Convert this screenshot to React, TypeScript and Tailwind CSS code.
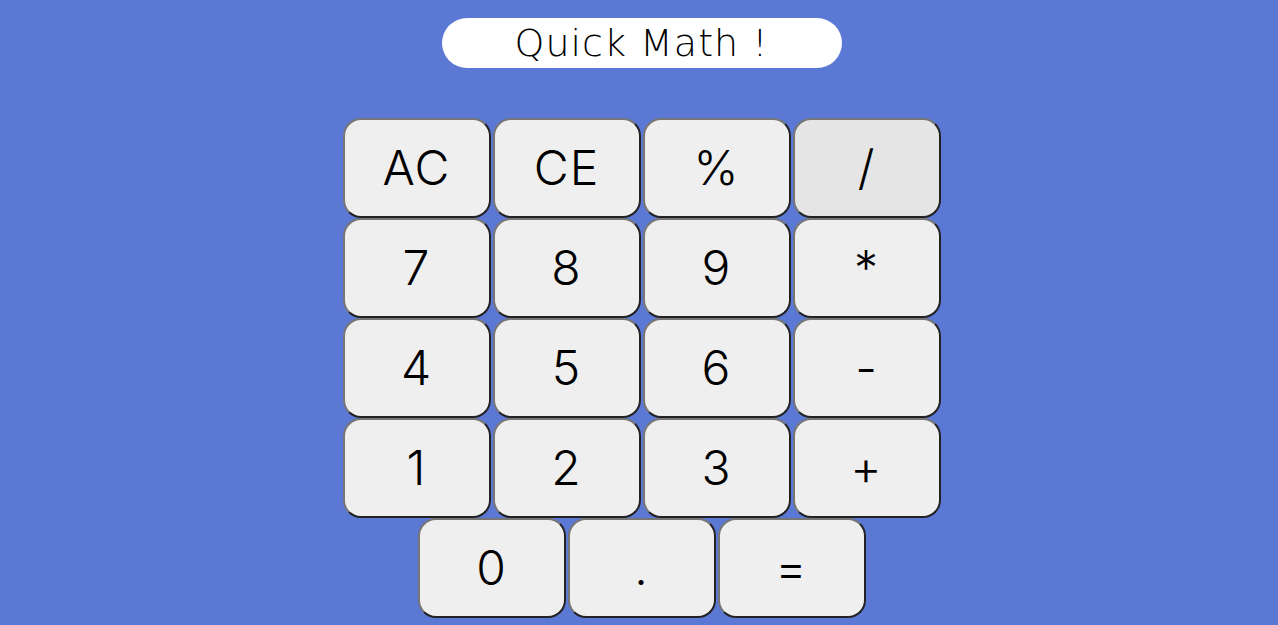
import React from "react";

const keys = ["AC", "CE", "%", "/", "7", "8", "9", "*", "4", "5", "6", "-", "1", "2", "3", "+", "0", ".", "="];

export default function App() {
  return (
    <div className="min-h-[625px] w-full bg-[#5b79d4] flex flex-col items-center pl-[5px]">
      <div
        className="mt-[18px] w-[400px] h-[50px] rounded-full bg-white flex items-center justify-center text-[38px] font-extralight tracking-[1px] text-black"
        style={{ fontFamily: '"DejaVu Sans", sans-serif' }}
      >
        Quick Math !
      </div>
      <div className="mt-[50px] w-[600px] flex flex-wrap justify-center gap-x-[2px]">
        {keys.map((k) => (
          <button
            key={k}
            className={`w-[148px] h-[100px] rounded-[18px] border-2 border-t-[#767676] border-l-[#767676] border-b-[#222222] border-r-[#222222] flex items-center justify-center text-[48px] font-light tracking-[1px] text-black ${
              k === "/" ? "bg-[#e5e5e5]" : "bg-[#efefef]"
            }`}
            style={{ fontFamily: '"Inter", sans-serif' }}
          >
            {k}
          </button>
        ))}
      </div>
    </div>
  );
}
